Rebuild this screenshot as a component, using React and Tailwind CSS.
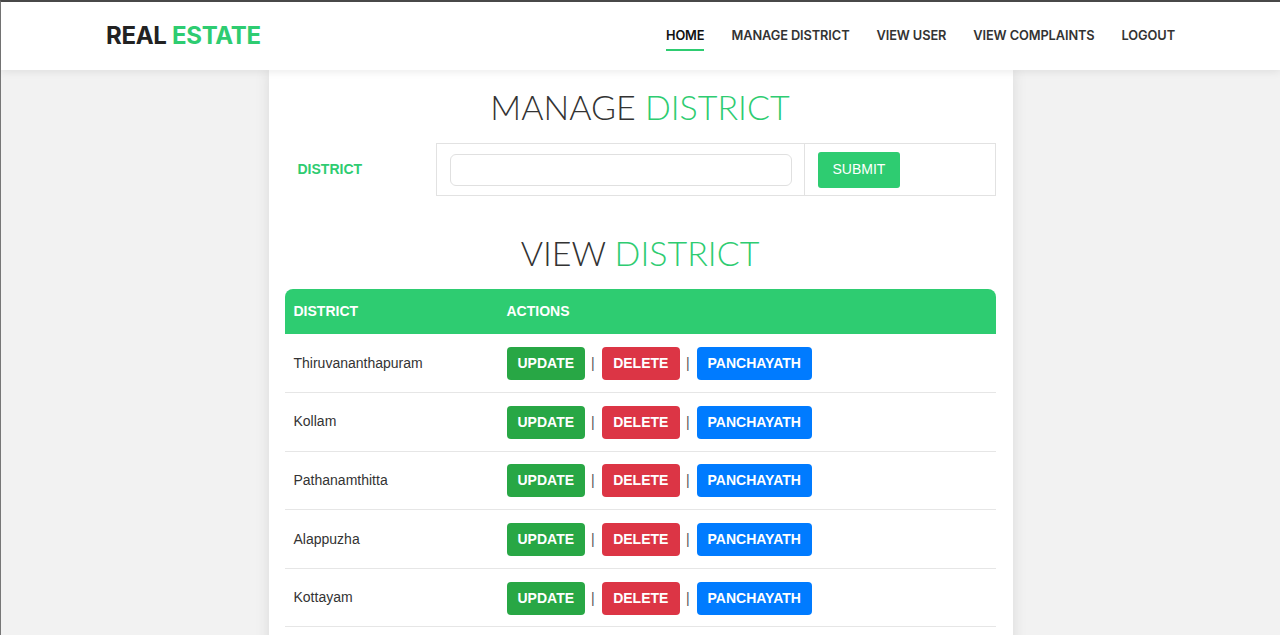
import React from "react";

const districts = [
  "Thiruvananthapuram",
  "Kollam",
  "Pathanamthitta",
  "Alappuzha",
  "Kottayam",
  "Idukki",
  "Ernakulam",
  "Thrissur",
];

const navLinks = ["HOME", "MANAGE DISTRICT", "VIEW USER", "VIEW COMPLAINTS", "LOGOUT"];

export default function App() {
  return (
    <div className="min-h-screen bg-[#f2f2f2] border-t-2 border-l border-t-[#4a4a4a] border-l-[#777]">
      <nav className="relative z-10 h-[68px] bg-white shadow-[0_2px_8px_rgba(0,0,0,0.08)] flex items-center justify-between pl-[105px] pr-[105px]">
        <div className="font-['Inter',sans-serif] font-bold text-[24px] tracking-[-0.3px] text-[#222]">
          REAL <span className="text-[#2ecc71]">ESTATE</span>
        </div>
        <ul className="flex items-center gap-[27px] font-['Inter',sans-serif] font-semibold text-[12.8px] tracking-[-0.1px] text-[#333]">
          {navLinks.map((link, i) => (
            <li key={link} className="relative">
              <a href="#" className={i === 0 ? "text-[#111]" : ""}>{link}</a>
              {i === 0 && (
                <span className="absolute left-0 right-0 -bottom-[5px] h-[2px] bg-[#2ecc71]" />
              )}
            </li>
          ))}
        </ul>
      </nav>

      <div className="w-[744px] mx-auto bg-white shadow-[0_0_14px_rgba(0,0,0,0.1)] pl-[16px] pr-[17px] pb-8 pt-[16px] font-['Liberation_Sans',Arial,sans-serif]">
        <h2 className="text-center font-['Lato',sans-serif] font-light text-[34px] leading-[41px] text-[#333]">
          MANAGE <span className="text-[#2ecc71]">DISTRICT</span>
        </h2>

        <div className="mt-[16px] flex h-[53px]">
          <div className="w-[151px] flex items-center pl-[13px] text-[14px] font-bold text-[#2ecc71]">
            DISTRICT
          </div>
          <div className="w-[369px] border border-[#e2e2e2] flex items-center pl-[13px] pr-[12px]">
            <input
              type="text"
              className="w-full h-[32px] border border-[#e0e0e0] rounded-[6px] px-3 text-[14px] outline-none"
            />
          </div>
          <div className="flex-1 border border-l-0 border-[#e2e2e2] flex items-center pl-[13px]">
            <button className="h-[36px] px-[15px] bg-[#2ecc71] text-white text-[14px] rounded-[3px]">
              SUBMIT
            </button>
          </div>
        </div>

        <h2 className="mt-[36px] text-center font-['Lato',sans-serif] font-light text-[34px] leading-[41px] text-[#333]">
          VIEW <span className="text-[#2ecc71]">DISTRICT</span>
        </h2>

        <table className="mt-[16px] w-full border-collapse text-[14px]">
          <thead>
            <tr className="bg-[#2ecc71] text-white">
              <th className="w-[213px] h-[45px] pl-[9px] text-left font-bold rounded-tl-[8px]">DISTRICT</th>
              <th className="h-[45px] pl-[9px] text-left font-bold rounded-tr-[8px]">ACTIONS</th>
            </tr>
          </thead>
          <tbody>
            {districts.map((d) => (
              <tr key={d} className="border-b border-[#e6e6e6]">
                <td className="h-[58.6px] pl-[9px] text-[#333]">{d}</td>
                <td className="h-[58.6px] pl-[9px]">
                  <div className="flex items-center font-bold text-white pt-[1px]">
                    <button className="h-[33px] px-[11px] bg-[#28a745] rounded-[4px]">UPDATE</button>
                    <span className="ml-[6px] mr-[7px] text-[#555] font-normal">|</span>
                    <button className="h-[33px] px-[11.5px] bg-[#dc3545] rounded-[4px]">DELETE</button>
                    <span className="ml-[6px] mr-[7px] text-[#555] font-normal">|</span>
                    <button className="h-[33px] px-[11px] bg-[#007bff] rounded-[4px]">PANCHAYATH</button>
                  </div>
                </td>
              </tr>
            ))}
          </tbody>
        </table>
      </div>
    </div>
  );
}
